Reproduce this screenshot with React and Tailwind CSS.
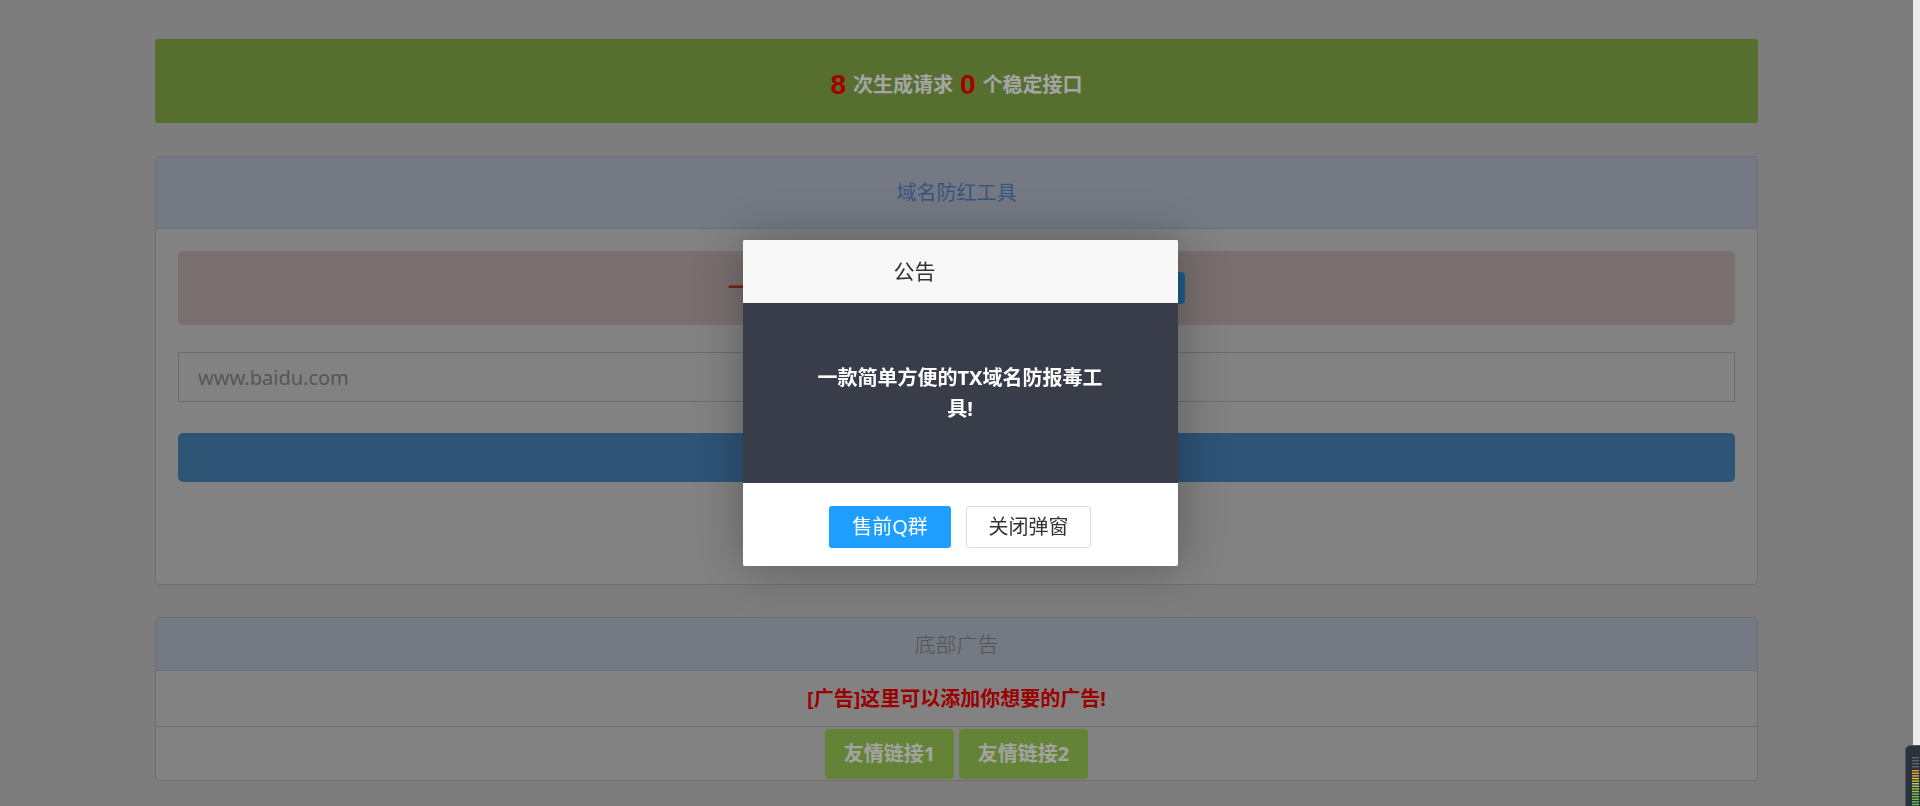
import React from "react";

function MeterWidget() {
  const bars = [];
  for (let i = 0; i < 4; i++) bars.push({ y: 12 + i * 3, c: "#5d6573" });
  const colors = ["#e39a3c", "#e3a83c", "#dcb53e", "#d6c040", "#cfc843", "#c4cc45", "#b2cc47", "#9fcc49", "#8cc84b", "#7cc44c", "#72c24d", "#6cc04e", "#66be4e", "#62bc4e"];
  colors.forEach((c, i) => bars.push({ y: 25 + i * 2.6, c }));
  return (
    <svg width="15" height="61" viewBox="0 0 15 61" className="block">
      <rect x="0.5" y="0.5" width="20" height="66" rx="5" fill="#2c323c" stroke="#4b5361" />
      {bars.map((b, i) => (
        <rect key={i} x="7" y={b.y} width="7" height="1.4" fill={b.c} />
      ))}
    </svg>
  );
}

export default function App() {
  return (
    <div className="relative flex h-[806px] w-full overflow-hidden bg-[#b4b4b4] font-['Noto_Sans','Noto_Sans_CJK_SC',sans-serif]">
      <div className="relative flex-1">
        <div className="mx-auto w-[1603px] pt-[39px]">
          {/* top stats bar */}
          <div className="flex h-[84px] items-center justify-center rounded-[3px] bg-[#7ba043] pt-[7px] text-[20px] leading-[28px]">
            <span className="font-['Liberation_Sans',sans-serif] text-[28px] font-bold text-[#e80000]">8</span>
            <span className="ml-[7px] font-bold text-[#ececec]">次生成请求</span>
            <span className="ml-[7px] font-['Liberation_Sans',sans-serif] text-[28px] font-bold text-[#e80000]">0</span>
            <span className="ml-[7px] font-bold text-[#ececec]">个稳定接口</span>
          </div>

          {/* main tool panel */}
          <div className="mt-[33px] rounded-[4px] border border-[#9e9e9e] bg-[#bbbbbb]">
            <div className="flex h-[72px] items-center justify-center rounded-t-[4px] border-b border-[#98a3b7] bg-[#a6aebe] text-[20px] text-[#4f7bb3]">
              域名防红工具
            </div>
            <div className="px-[22px] pb-[102px] pt-[22px]">
              <div className="flex h-[74px] items-center justify-center rounded-[5px] bg-[#aea0a0]">
                <div className="flex w-[457px] items-center justify-between">
                  <span className="text-[20px] font-bold text-[#b52c2c]">一键生成防红链接</span>
                  <span className="flex h-[32px] items-center rounded-[4px] bg-[#2c85c8] px-[14px] text-[16px] text-white">立即购买</span>
                </div>
              </div>
              <input
                type="text"
                placeholder="www.baidu.com"
                className="mt-[27px] block h-[50px] w-full border border-[#9a9a9a] bg-transparent px-[19px] text-[20px] outline-none placeholder:text-[#7c7c7c]"
              />
              <button className="mt-[31px] flex h-[49px] w-full items-center justify-center rounded-[5px] bg-[#4379aa] text-[20px] text-white">
                生成防红链接
              </button>
            </div>
          </div>

          {/* footer ad panel */}
          <div className="mt-[32px] rounded-[4px] border border-[#9e9e9e] bg-[#bbbbbb]">
            <div className="flex h-[53px] items-center justify-center rounded-t-[4px] border-b border-[#98a3b7] bg-[#a6aebe] font-['Noto_Sans_CJK_SC',serif] text-[21px] font-light text-[#777777]">
              底部广告
            </div>
            <div className="flex h-[56px] items-center justify-center border-b border-[#9d9d9d] text-[20px] font-bold text-[#df0000]">
              [广告]这里可以添加你想要的广告!
            </div>
            <div className="flex h-[53px] items-start justify-center gap-[5px] pt-[2px]">
              <a className="flex h-[50px] w-[129px] items-center justify-center rounded-[4px] bg-[#8fbd4e] text-[20px] font-bold text-[#eaeaea]">
                友情链接1
              </a>
              <a className="flex h-[50px] w-[129px] items-center justify-center rounded-[4px] bg-[#8fbd4e] text-[20px] font-bold text-[#eaeaea]">
                友情链接2
              </a>
            </div>
          </div>
        </div>

        {/* shade */}
        <div className="absolute inset-0 bg-black/30" />
      </div>

      {/* scrollbar strip */}
      <div className="w-[7px] bg-[#ececec]" />

      {/* corner widget */}
      <div className="absolute bottom-0 right-0">
        <MeterWidget />
      </div>

      {/* notice dialog */}
      <div className="fixed inset-0 flex items-center justify-center">
        <div className="w-[435px] overflow-hidden rounded-[2px] bg-white shadow-[1px_1px_50px_rgba(0,0,0,0.3)]">
          <div className="flex h-[63px] items-center bg-[#f8f8f8] pl-[151px] text-[21px] text-[#333333]">
            公告
          </div>
          <div className="flex h-[180px] items-center justify-center bg-[#393d49] px-[70px] text-center text-[20px] font-bold leading-[31px] text-white">
            一款简单方便的TX域名防报毒工具!
          </div>
          <div className="flex h-[83px] justify-center gap-[15px] pt-[23px]">
            <button className="h-[42px] w-[122px] rounded-[3px] bg-[#1e9fff] text-[20px] text-white">售前Q群</button>
            <button className="h-[42px] w-[125px] rounded-[3px] border border-[#dedede] bg-white text-[20px] text-[#333333]">关闭弹窗</button>
          </div>
        </div>
      </div>
    </div>
  );
}
